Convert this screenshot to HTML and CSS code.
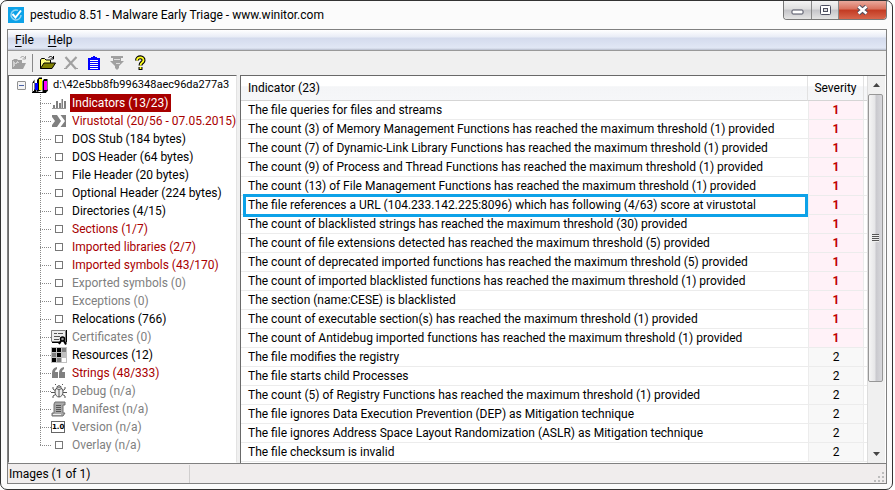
FILE: index.html
```html
<!DOCTYPE html>
<html lang="en">
<head>
<meta charset="utf-8">
<title>pestudio 8.51 - Malware Early Triage - www.winitor.com</title>
<link rel="stylesheet" href="styles.css">
</head>
<body>
<div class="window">
    <header class="titlebar">
        <svg class="logo" width="16" height="16" viewBox="0 0 16 16">
            <rect width="16" height="16" fill="#0da2e8"/>
            <path d="M13 8a5 5 0 1 1-3-4.600" fill="none" stroke="#8fd4f5" stroke-width="1.500"/>
            <path d="M4.500 7l3 3.500L13 3.500" fill="none" stroke="#fff" stroke-width="2"/>
        </svg>
        <h1>pestudio 8.51 - Malware Early Triage - www.winitor.com</h1>
        <div class="controls">
            <button type="button" class="min" aria-label="Minimize"><svg width="13" height="12"><rect x="1" y="6" width="11" height="4" rx="1" fill="#fff" stroke="#4d4f60"/></svg></button>
            <button type="button" class="max" aria-label="Maximize"><svg width="13" height="12"><rect x="1.500" y="1.500" width="10" height="9" rx="1" fill="#fff" stroke="#4d4f60"/><rect x="4.500" y="4.500" width="4" height="3" fill="#ddd" stroke="#4d4f60"/></svg></button>
            <button type="button" class="close" aria-label="Close"><svg width="13" height="12"><path d="M2.500 2.500l8 7M10.500 2.500l-8 7" stroke="#4d4f60" stroke-width="4.500"/><path d="M2.500 2.500l8 7M10.500 2.500l-8 7" stroke="#fff" stroke-width="2.500"/></svg></button>
        </div>
    </header>
    <div class="client">
        <nav class="menu">
            <button type="button"><u>F</u>ile</button>
            <button type="button"><u>H</u>elp</button>
        </nav>
        <div class="toolbar">
            <button type="button" aria-label="Reopen" disabled><svg width="16" height="16"><path d="M1 14V5h1l1-1h3l1 1h4v3h4l-3 6z" fill="#a0a0a0"/><path d="M2 6h1v1h1v1h1V7h1V6h1v1h1v1H6v1H4v2H3v1H2z" fill="#d0d0d0"/><path d="M9.500 3c1-2 3-2 4.500 0M14.500 1v3h-3" fill="none" stroke="#a0a0a0"/></svg></button>
            <span class="sep"></span>
            <button type="button" aria-label="Open file"><svg width="16" height="16"><path d="M.5 13.500V5l1-1.500h3L6 5h4.500v3" fill="#ffff80" stroke="#000"/><path d="M.5 13.500l3.500-5.500h11.500l-3.500 5.500z" fill="#808000" stroke="#000"/><path d="M8.500 3c1-2 3-2 4.500 0M13.500 1v3h-3" fill="none" stroke="#000"/></svg></button>
            <button type="button" aria-label="Close file" disabled><svg width="16" height="16"><path d="M2.500 2l10.500 12M13.500 2L3 13" stroke="#a0a0a0" stroke-width="2.200"/><path d="M1 13h3v1H1zM13 13h2v1h-2z" fill="#a0a0a0"/></svg></button>
            <button type="button" aria-label="Report"><svg width="16" height="16"><path d="M2 3h3V2h2V1h2v1h2v1h3v12H2z" fill="#00f"/><path d="M4 5.500h8M4 7.500h8M4 9.500h8M4 11.500h8M4 13.500h8" stroke="#fff"/></svg></button>
            <button type="button" aria-label="Filter" disabled><svg width="16" height="16"><path d="M2 1h12v2h-2v3h3l-5 5v2l-2 2-2-2v-2L1 6h3V3H2z" fill="#a0a0a0"/><path d="M5 4.500h6M7 8.500h4" stroke="#ddd"/></svg></button>
            <button type="button" aria-label="About"><svg width="16" height="16"><path d="M5 5.500C5 1 12 1.500 11.500 5.500C11 8 8.500 7.500 8.500 10.500M8.500 12v3" fill="none" stroke="#000" stroke-width="4"/><path d="M5 5.500C5 1 12 1.500 11.500 5.500C11 8 8.500 7.500 8.500 10.500M8.500 12v2" fill="none" stroke="#ffff20" stroke-width="1.800"/></svg></button>
        </div>
        <main class="panes">
            <section class="tree" aria-label="Images">
                <div class="root">
                    <button type="button" class="toggle" aria-label="Collapse"></button>
                    <svg width="16" height="16"><path d="M.5 15.500v-10l2-3v10h2v3zM5 15V3l2-2.500h3V13zM10.500 15V4l1.500-2h3.500v11l-2 2.500z" fill="#000"/><path d="M0 15.500h14l2-3" fill="none" stroke="#000"/><path d="M1 6h1v8H1z" fill="#fff"/><path d="M3 6h3v7H3z" fill="#00f"/><path d="M7 2h3v11H7z" fill="#ff0"/><path d="M12 4h3v9h-3z" fill="#f0f"/></svg>
                    <span>d:\42e5bb8fb996348aec96da277a3</span>
                </div>
                <ul>
                    <li class="bad selected"><svg width="16" height="16"><path d="M2 13V10h2v3zM5 13V6h2v7zM8 13V8h2v5zM10.500 13V4h1.500v9zM13 13V6h2v7z" fill="#808080"/><path d="M1 13.500h14" stroke="#999"/></svg><a href="#">Indicators (13/23)</a></li>
                    <li class="bad"><svg width="16" height="16"><path d="M1 2h14v12H1z" fill="#808080"/><path d="M6 2h3.500l4.500 6-4.500 6H6l4-6z" fill="#fff"/><path d="M1 4l3 4-3 4z" fill="#fff"/></svg><a href="#">Virustotal (20/56 - 07.05.2015)</a></li>
                    <li><i class="box"></i><a href="#">DOS Stub (184 bytes)</a></li>
                    <li><i class="box"></i><a href="#">DOS Header (64 bytes)</a></li>
                    <li><i class="box"></i><a href="#">File Header (20 bytes)</a></li>
                    <li><i class="box"></i><a href="#">Optional Header (224 bytes)</a></li>
                    <li><i class="box"></i><a href="#">Directories (4/15)</a></li>
                    <li class="bad"><i class="box"></i><a href="#">Sections (1/7)</a></li>
                    <li class="bad"><i class="box"></i><a href="#">Imported libraries (2/7)</a></li>
                    <li class="bad"><i class="box"></i><a href="#">Imported symbols (43/170)</a></li>
                    <li class="none"><i class="box"></i><a href="#">Exported symbols (0)</a></li>
                    <li class="none"><i class="box"></i><a href="#">Exceptions (0)</a></li>
                    <li><i class="box"></i><a href="#">Relocations (766)</a></li>
                    <li class="none"><svg width="16" height="16"><path d="M.5 1.500h14v11H.5z" fill="#eee" stroke="#808080"/><path d="M15.500 1v12.500M1 13.500h9" stroke="#000"/><path d="M3 4.500h3M7 4.500h5M3 7.500h6M3 10.500h5" stroke="#555"/><circle cx="11.500" cy="10" r="2" fill="#999" stroke="#000" stroke-width="1.500"/><path d="M10 12l-2 3M13 12l2 3.500" stroke="#000" stroke-width="2"/></svg><a href="#">Certificates (0)</a></li>
                    <li><svg width="16" height="16"><path d="M0 0h16v16H0z" fill="#c0c0c0"/><path d="M1 1h4v4H1zM6 1h4v4H6zM6 6h4v4H6zM1 11h4v4H1z" fill="#000"/><path d="M11 1h4v4h-4zM1 6h4v4H1zM6 11h4v4H6z" fill="#808080"/><path d="M11 11h4v4h-4z" fill="#fff"/></svg><a href="#">Resources (12)</a></li>
                    <li class="bad"><svg width="16" height="16"><path d="M6 2v2Q4 5 4 7h3v6H1V8Q1 3 6 2zM13 2v2Q11 5 11 7h3v6H8V8Q8 3 13 2z" fill="#808080"/></svg><a href="#">Strings (48/333)</a></li>
                    <li class="none"><svg width="16" height="16"><ellipse cx="8" cy="9" rx="4" ry="5" fill="#eee" stroke="#555"/><path d="M5 5.500Q8 7.500 11 5.500M8 7v7M5.500 4Q8 1 10.500 4M5 2L4 1M11 2l1-1M4 7.500L2 6V4M12 7.500L14 6V4M4 9.500H0M12 9.500h4M4.500 11.500L2 13v2M11.500 11.500l2.500 1.500v2" fill="none" stroke="#555"/></svg><a href="#">Debug (n/a)</a></li>
                    <li class="none"><svg width="16" height="16"><path d="M4 1h10v3h-2v8h2l-2 3H1v-3h2V3z" fill="#a8a8a8" stroke="#707070"/><path d="M5 4.500h5M5 6.500h5M5 8.500h5M5 10.500h5" stroke="#555"/><path d="M2 13.500h8" stroke="#eee"/></svg><a href="#">Manifest (n/a)</a></li>
                    <li class="none"><b class="ver">1.0</b><a href="#">Version (n/a)</a></li>
                    <li class="none"><i class="box"></i><a href="#">Overlay (n/a)</a></li>
                </ul>
            </section>
            <section class="list">
                <table>
                    <thead>
                        <tr><th>Indicator (23)</th><th class="sev">Severity</th><th class="rest"></th></tr>
                    </thead>
                    <tbody>
                        <tr class="s1"><td>The file queries for files and streams</td><td>1</td><td></td></tr>
                        <tr class="s1"><td>The count (3) of Memory Management Functions has reached the maximum threshold (1) provided</td><td>1</td><td></td></tr>
                        <tr class="s1"><td>The count (7) of Dynamic-Link Library Functions has reached the maximum threshold (1) provided</td><td>1</td><td></td></tr>
                        <tr class="s1"><td>The count (9) of Process and Thread Functions has reached the maximum threshold (1) provided</td><td>1</td><td></td></tr>
                        <tr class="s1"><td>The count (13) of File Management Functions has reached the maximum threshold (1) provided</td><td>1</td><td></td></tr>
                        <tr class="s1 marked"><td>The file references a URL (104.233.142.225:8096) which has following (4/63) score at virustotal</td><td>1</td><td></td></tr>
                        <tr class="s1"><td>The count of blacklisted strings has reached the maximum threshold (30) provided</td><td>1</td><td></td></tr>
                        <tr class="s1"><td>The count of file extensions detected has reached the maximum threshold (5) provided</td><td>1</td><td></td></tr>
                        <tr class="s1"><td>The count of deprecated imported functions has reached the maximum threshold (5) provided</td><td>1</td><td></td></tr>
                        <tr class="s1"><td>The count of imported blacklisted functions has reached the maximum threshold (1) provided</td><td>1</td><td></td></tr>
                        <tr class="s1"><td>The section (name:CESE) is blacklisted</td><td>1</td><td></td></tr>
                        <tr class="s1"><td>The count of executable section(s) has reached the maximum threshold (1) provided</td><td>1</td><td></td></tr>
                        <tr class="s1"><td>The count of Antidebug imported functions has reached the maximum threshold (1) provided</td><td>1</td><td></td></tr>
                        <tr><td>The file modifies the registry</td><td>2</td><td></td></tr>
                        <tr><td>The file starts child Processes</td><td>2</td><td></td></tr>
                        <tr><td>The count (5) of Registry Functions has reached the maximum threshold (1) provided</td><td>2</td><td></td></tr>
                        <tr><td>The file ignores Data Execution Prevention (DEP) as Mitigation technique</td><td>2</td><td></td></tr>
                        <tr><td>The file ignores Address Space Layout Randomization (ASLR) as Mitigation technique</td><td>2</td><td></td></tr>
                        <tr><td>The file checksum is invalid</td><td>2</td><td></td></tr>
                    </tbody>
                </table>
                <div class="scroll">
                    <button type="button" aria-label="Scroll up"><svg width="7" height="4"><path d="M0 4L3.500 0L7 4z" fill="#444"/></svg></button>
                    <div class="track"><div class="thumb"><i></i></div></div>
                    <button type="button" aria-label="Scroll down"><svg width="7" height="4"><path d="M0 0L3.500 4L7 0z" fill="#444"/></svg></button>
                </div>
            </section>
        </main>
        <footer class="status">
            <span>Images (1 of 1)</span>
            <svg width="12" height="12"><path d="M8 1h2v2H8zM8 5h2v2H8zM8 9h2v2H8zM4 5h2v2H4zM4 9h2v2H4zM0 9h2v2H0z" fill="#bdbdbd"/></svg>
        </footer>
    </div>
</div>
</body>
</html>
```
FILE: styles.css
```css
* { box-sizing: border-box; margin: 0; padding: 0; }
body { font: 12px/18px Roboto, "Open Sans", sans-serif; color: #000; background: #fff; }
button { font: inherit; color: inherit; background: none; border: 0; }
svg { display: block; flex: none; }
a { color: inherit; text-decoration: none; }
ul { list-style: none; }

.window { display: flex; flex-direction: column; min-height: 100vh; margin-right: 2px; padding: 0 5px 5px 6px; border: 1px solid #333; border-radius: 7px; background: #fbfbfb; }

.titlebar { display: flex; height: 28px; align-items: center; }
.titlebar .logo { margin-left: 1px; }
.titlebar h1 { flex: 1; margin-left: 6px; font-size: 12px; font-weight: normal; white-space: nowrap; }
.controls { display: flex; align-self: flex-start; height: 19px; border: 1px solid #777; border-top: 0; border-radius: 0 0 4px 4px; overflow: hidden; }
.controls button { display: flex; align-items: center; justify-content: center; width: 28px; border-right: 1px solid #888; background: linear-gradient(#f4f4f4, #dedede 45%, #c4c4c8 50%, #e4e4e4); }
.controls .max { width: 27px; }
.controls .close { width: 47px; border: 0; background: linear-gradient(#e9a99c, #d9705c 45%, #c23a22 50%, #d8664c); }

.client { display: flex; flex: 1; flex-direction: column; border: 1px solid #808080; background: #f0f0f0; }
.menu { display: flex; height: 21px; border-bottom: 1px solid #999; background: linear-gradient(#fff, #e8ecf6 35%, #d4dbed 40%, #e1e7f5 90%, #b6bccc); }
.menu button { padding: 0 7px; }
.menu u { text-underline-offset: 2px; }

.toolbar { display: flex; align-items: center; height: 24px; padding-left: 3px; }
.toolbar button { width: 16px; height: 16px; margin-right: 7px; }
.toolbar .sep { width: 1px; height: 18px; margin: 0 7px 0 -2px; background: #888; }

.panes { display: flex; flex: 1; }
.tree { width: 229px; flex: none; padding-bottom: 6px; overflow: hidden; border: 1px solid #696969; border-right-color: #e3e3e3; border-bottom-color: #fff; background: #fff; white-space: nowrap; }
.root { display: flex; align-items: center; height: 18px; padding-left: 8px; font-size: 11px; }
.root svg { margin-right: 5px; }
.toggle { flex: none; width: 9px; height: 9px; border: 1px solid #919191; border-radius: 1px; background: linear-gradient(#4b63a7, #4b63a7) center / 5px 1px no-repeat #f4f4f4; }
.toggle + svg { margin-left: 6px; }
.tree ul { margin-left: 31px; background: repeating-linear-gradient(#888 0 1px, #fff 1px 2px) 0 0 / 1px calc(100% - 9px) no-repeat; }
.tree li { display: flex; align-items: center; height: 18px; }
.tree li::before { content: ""; flex: none; width: 11px; height: 1px; background: repeating-linear-gradient(90deg, #888 0 1px, #fff 1px 2px); }
.tree a { height: 18px; margin-left: 3px; padding: 0 2px; }
.bad { color: #a80000; }
.none { color: #808080; }
.selected a { color: #fff; background: #a80000; }
.box { flex: none; width: 8px; height: 8px; margin: 0 4px; border: 1px solid #777; }
.ver { flex: none; width: 14px; height: 12px; margin-right: 2px; border: 1px solid #666; color: #000; font: bold 7px/10px "DejaVu Sans", sans-serif; text-align: center; }

.list { display: flex; flex: 1; min-width: 0; margin-left: 3px; border: 1px solid #696969; border-right-color: #fff; border-bottom: 0; background: #fff; }
table { flex: 1; align-self: flex-start; table-layout: fixed; border-collapse: separate; border-spacing: 0; }
th { height: 25px; padding: 0 0 1px 7px; border-right: 1px solid #e2e2e2; border-bottom: 1px solid #d5d5d5; background: linear-gradient(#fff 40%, #f4f5f7 45%, #f6f7f9); font-weight: normal; text-align: left; white-space: nowrap; }
.sev { width: 56px; padding: 0 0 1px; text-align: center; }
.rest { width: 3px; padding: 0; border-right: 0; }
td { height: 19px; border-bottom: 1px solid #ececec; white-space: nowrap; }
td:first-child { position: relative; padding-left: 7px; }
td:nth-child(2) { border-right: 1px solid #ececec; border-left: 1px solid #ececec; background: #f8f8f8; text-align: center; }
.s1 td:nth-child(2) { background: #fff2f8; color: #c00000; font-weight: bold; }
.marked td:first-child::after { content: ""; position: absolute; inset: -2px 0 -3px 2px; border: 3px solid #0da2e8; pointer-events: none; }

.scroll { display: flex; flex-direction: column; width: 18px; border-left: 1px solid #ddd; background: #f0f0f0; }
.scroll button { display: flex; align-items: center; justify-content: center; height: 18px; }
.track { flex: 1; }
.thumb { display: flex; align-items: center; justify-content: center; width: 15px; height: 82%; border: 1px solid #979797; border-radius: 2px; background: linear-gradient(90deg, #f5f5f5, #e6e6e8 45%, #c9c9ce 55%, #d8d8dc); }
.thumb i { width: 7px; height: 8px; background: repeating-linear-gradient(#555 0 1px, #eee 1px 2px); }

.status { display: flex; align-items: center; justify-content: space-between; height: 20px; border-top: 1px solid #808080; background: #f0eded; }
.status span { width: 182px; padding-left: 1px; border-right: 1px solid #d0cece; }
.status svg { align-self: flex-end; }
```
